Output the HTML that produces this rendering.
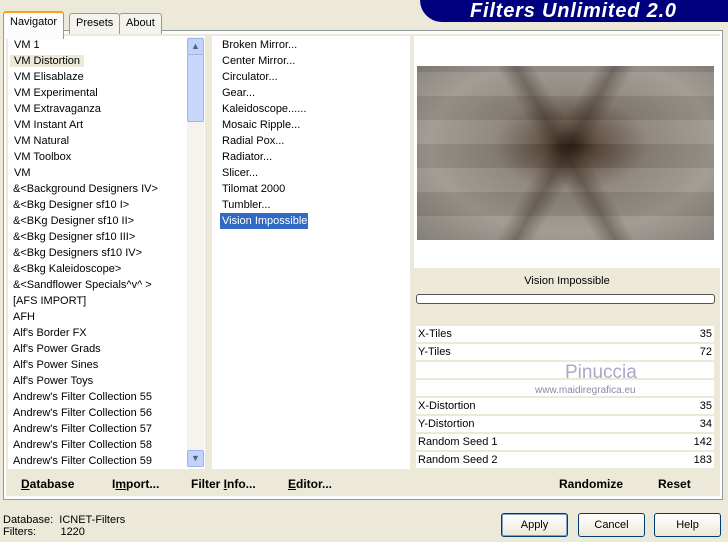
<!DOCTYPE html>
<html><head><style>
body{margin:0;width:728px;height:542px;background:#ece9d8;font-family:"Liberation Sans",sans-serif;font-size:11px;color:#000;position:relative;overflow:hidden}
.a{position:absolute}
.tab{position:absolute;border:1px solid #919b9c;border-bottom:none;background:#f4f3ee;padding:3px 6px;font-size:11px;border-radius:3px 3px 0 0}
.list div{height:16px;line-height:16px;padding-left:6px;white-space:nowrap}
.btn{position:absolute;border:1px solid #003c74;border-radius:3px;background:linear-gradient(#fff,#ece9d8);text-align:center;line-height:22px;height:22px}
.row{position:absolute;left:416px;width:298px;height:16px;background:#fff;line-height:16px}
.row span{position:absolute;right:2px}
.row b{font-weight:normal;padding-left:2px}
</style></head><body>
<div class="a" style="left:420px;top:0;width:308px;height:22px;background:#00007f;border-radius:0 0 0 22px"></div>
<div class="a" style="left:470px;top:0;font:italic bold 20px 'Liberation Sans',sans-serif;color:#fff;line-height:22px;letter-spacing:0.8px">Filters Unlimited 2.0</div>
<div class="a" style="left:3px;top:30px;width:718px;height:468px;border:1px solid #919b9c;background:#fcfcfe"></div>
<div class="tab" style="left:3px;top:11px;height:20px;background:#fcfcfe;border-top:2px solid #f4a21c;z-index:2">Navigator</div>
<div class="tab" style="left:69px;top:13px;height:16px">Presets</div>
<div class="tab" style="left:119px;top:13px;height:16px">About</div>
<div class="a" style="left:6px;top:34px;width:714px;height:462px;background:#ece9d8"></div>
<div class="a list" style="left:8px;top:36px;width:197px;height:432px;background:#fff;overflow:hidden;padding-top:1px">
<div>VM 1</div><div><span style="background:#ece9d8;padding:0 4px;margin-left:-4px">VM Distortion</span></div><div>VM Elisablaze</div><div>VM Experimental</div><div>VM Extravaganza</div><div>VM Instant Art</div><div>VM Natural</div><div>VM Toolbox</div><div>VM</div><div style="padding-left:5px">&amp;&lt;Background Designers IV&gt;</div><div style="padding-left:5px">&amp;&lt;Bkg Designer sf10 I&gt;</div><div style="padding-left:5px">&amp;&lt;BKg Designer sf10 II&gt;</div><div style="padding-left:5px">&amp;&lt;Bkg Designer sf10 III&gt;</div><div style="padding-left:5px">&amp;&lt;Bkg Designers sf10 IV&gt;</div><div style="padding-left:5px">&amp;&lt;Bkg Kaleidoscope&gt;</div><div style="padding-left:5px">&amp;&lt;Sandflower Specials^v^ &gt;</div><div style="padding-left:5px">[AFS IMPORT]</div><div style="padding-left:5px">AFH</div><div style="padding-left:5px">Alf's Border FX</div><div style="padding-left:5px">Alf's Power Grads</div><div style="padding-left:5px">Alf's Power Sines</div><div style="padding-left:5px">Alf's Power Toys</div><div style="padding-left:5px">Andrew's Filter Collection 55</div><div style="padding-left:5px">Andrew's Filter Collection 56</div><div style="padding-left:5px">Andrew's Filter Collection 57</div><div style="padding-left:5px">Andrew's Filter Collection 58</div><div style="padding-left:5px">Andrew's Filter Collection 59</div>
</div>
<div class="a" style="left:187px;top:37px;width:17px;height:430px;background:#f4f3ee"></div>
<div class="a" style="left:187px;top:38px;width:15px;height:15px;background:#c1d3fb;border:1px solid #a0b4e8;border-radius:2px;text-align:center;font-size:9px;line-height:15px;color:#4d6185">&#9650;</div>
<div class="a" style="left:187px;top:54px;width:15px;height:66px;background:#c8d6fb;border:1px solid #a0b4e8;border-radius:2px"></div>
<div class="a" style="left:187px;top:450px;width:15px;height:15px;background:#c1d3fb;border:1px solid #a0b4e8;border-radius:2px;text-align:center;font-size:9px;line-height:15px;color:#4d6185">&#9660;</div>
<div class="a list" style="left:212px;top:36px;width:198px;height:432px;background:#fff;padding-top:1px">
<div style="padding-left:10px">Broken Mirror...</div><div style="padding-left:10px">Center Mirror...</div><div style="padding-left:10px">Circulator...</div><div style="padding-left:10px">Gear...</div><div style="padding-left:10px">Kaleidoscope......</div><div style="padding-left:10px">Mosaic Ripple...</div><div style="padding-left:10px">Radial Pox...</div><div style="padding-left:10px">Radiator...</div><div style="padding-left:10px">Slicer...</div><div style="padding-left:10px">Tilomat 2000</div><div style="padding-left:10px">Tumbler...</div><div style="padding-left:8px"><span style="background:#316ac5;color:#fff;padding:0 2px;display:inline-block;width:84px">Vision Impossible</span></div>
</div>
<div class="a" style="left:414px;top:36px;width:306px;height:232px;background:#fff"></div>
<div class="a" style="left:417px;top:66px;width:297px;height:174px;background:radial-gradient(ellipse at 52% 45%,#2a1e14 0%,#5b4a3a 12%,#8a827a 35%,#9d978f 65%,#7d7770 100%)"></div>
<div class="a" style="left:417px;top:66px;width:297px;height:174px;background:linear-gradient(60deg,transparent 45%,rgba(40,30,20,.35) 50%,transparent 55%),linear-gradient(120deg,transparent 45%,rgba(40,30,20,.35) 50%,transparent 55%),repeating-linear-gradient(0deg,rgba(255,255,255,.06) 0 24px,rgba(0,0,0,.06) 24px 48px)"></div>
<div class="a" style="left:414px;top:270px;width:306px;height:22px;text-align:center;line-height:22px">Vision Impossible</div>
<div class="a" style="left:416px;top:294px;width:297px;height:8px;border:1px solid #555;border-radius:3px;background:#fff"></div>
<div class="row" style="top:326px"><b>X-Tiles</b><span>35</span></div>
<div class="row" style="top:344px"><b>Y-Tiles</b><span>72</span></div>
<div class="row" style="top:362px"></div>
<div class="row" style="top:380px"></div>
<div class="a" style="left:565px;top:362px;font-size:19px;color:#a8a8c8">Pinuccia</div>
<div class="a" style="left:535px;top:385px;font-size:10px;color:#8a8aa8">www.maidiregrafica.eu</div>
<div class="row" style="top:398px"><b>X-Distortion</b><span>35</span></div>
<div class="row" style="top:416px"><b>Y-Distortion</b><span>34</span></div>
<div class="row" style="top:434px"><b>Random Seed 1</b><span>142</span></div>
<div class="row" style="top:452px"><b>Random Seed 2</b><span>183</span></div>
<div class="a" style="left:21px;top:477px;font-weight:bold;font-size:12px"><u>D</u>atabase</div>
<div class="a" style="left:112px;top:477px;font-weight:bold;font-size:12px">I<u>m</u>port...</div>
<div class="a" style="left:191px;top:477px;font-weight:bold;font-size:12px">Filter <u>I</u>nfo...</div>
<div class="a" style="left:288px;top:477px;font-weight:bold;font-size:12px"><u>E</u>ditor...</div>
<div class="a" style="left:559px;top:477px;font-weight:bold;font-size:12px">Randomize</div>
<div class="a" style="left:658px;top:477px;font-weight:bold;font-size:12px">Reset</div>
<div class="a" style="left:3px;top:514px;line-height:12px">Database:&nbsp; ICNET-Filters<br>Filters:&nbsp;&nbsp;&nbsp;&nbsp;&nbsp;&nbsp;&nbsp; 1220</div>
<div class="btn" style="left:501px;top:513px;width:65px;box-shadow:inset 0 0 0 1px #7da2ce">Apply</div>
<div class="btn" style="left:578px;top:513px;width:65px">Cancel</div>
<div class="btn" style="left:654px;top:513px;width:65px">Help</div>
</body></html>
